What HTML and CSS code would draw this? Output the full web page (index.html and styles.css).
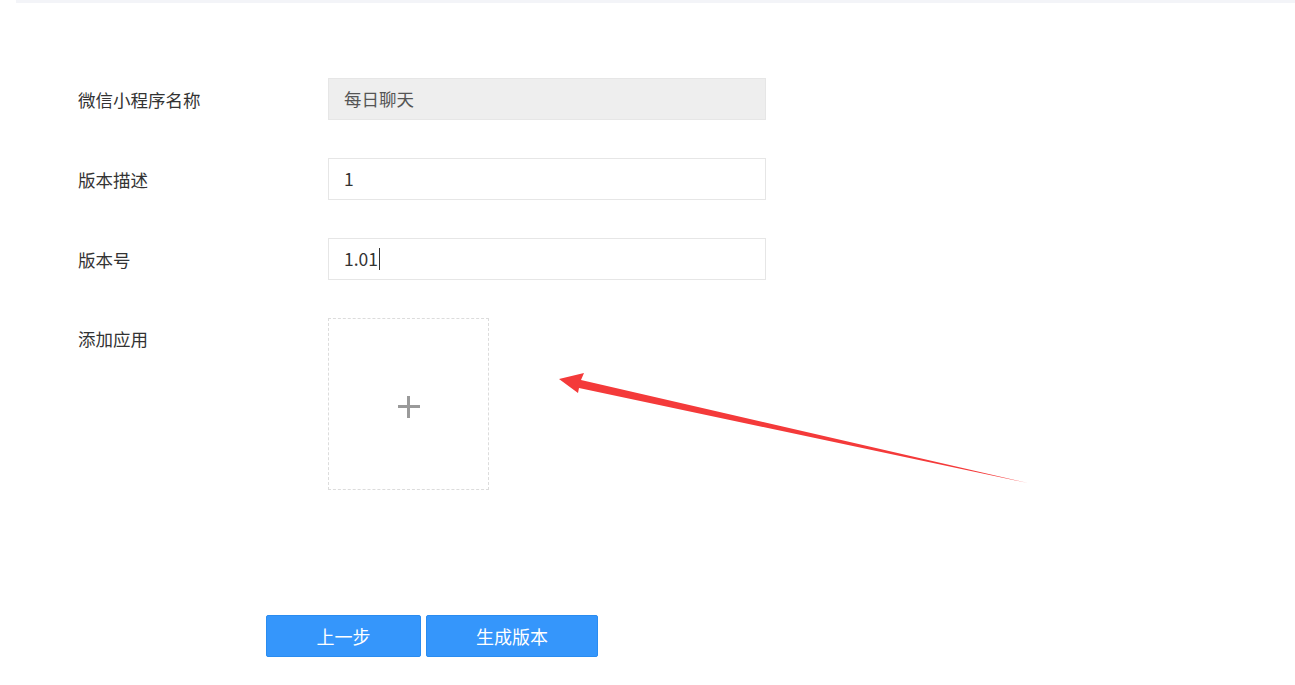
FILE: index.html
```html
<!DOCTYPE html>
<html>
<head lang="zh">
    <meta charset="UTF-8">
    <title>生成版本</title>
    <link rel="stylesheet" href="styles.css">
</head>
<body>
    <div class="top-bar"></div>
    <div class="page">
        <div class="form">
            <div class="form-row">
                <label class="form-label">微信小程序名称</label>
                <div class="field disabled">每日聊天</div>
            </div>
            <div class="form-row">
                <label class="form-label">版本描述</label>
                <div class="field">1</div>
            </div>
            <div class="form-row">
                <label class="form-label">版本号</label>
                <div class="field">1.01<span class="caret"></span></div>
            </div>
            <div class="form-row upload-row">
                <label class="form-label">添加应用</label>
                <div class="upload"><span class="plus"></span></div>
            </div>
        </div>
        <div class="btns">
            <a href="javascript:;" class="btn prev">上一步</a>
            <a href="javascript:;" class="btn build">生成版本</a>
        </div>
    </div>
    <!-- 标注箭头 -->
    <svg class="arrow" width="1295" height="685" viewBox="0 0 1295 685">
        <polygon points="559,379 584,373 581,380 1028,483 579,388 578,393" fill="#f43a3a"/>
    </svg>
</body>
</html>
```

FILE: styles.css
```css
*{
    margin:0; padding:0;
    text-decoration: none;
    box-sizing: border-box;
}
body{
    background:#fff;
    font-family: "Noto Sans CJK SC", "Microsoft YaHei", sans-serif;
    color:#333;
    position:relative;
    width:1295px;
    height:685px;
    overflow:hidden;
}
.top-bar{
    height:3px;
    margin-left:16px;
    background-color:#f3f4f8;
}
.page{
    padding-top:75px;
}
.form{
    padding-left:78px;
}
.form-row{
    display:flex;
    align-items:center;
    height:42px;
    margin-bottom:38px;
}
.form-label{
    width:250px;
    font-size:17.5px;
    color:#333;
}
.field{
    width:438px;
    height:42px;
    line-height:40px;
    padding-left:15px;
    border:1px solid #e6e6e6;
    font-size:17.5px;
    color:#333;
    display:flex;
    align-items:center;
}
.field.disabled{
    background-color:#eeeeee;
    color:#555;
}
.caret{
    display:inline-block;
    width:1px;
    height:22px;
    margin-left:1px;
    background:#333;
}
.upload-row{
    align-items:flex-start;
    height:auto;
    margin-bottom:0;
}
.upload-row .form-label{
    line-height:42px;
}
.upload{
    width:161px;
    height:172px;
    border:1px dashed #dcdcdc;
    display:flex;
    align-items:center;
    justify-content:center;
}
.plus{
    position:relative;
    width:22px;
    height:22px;
    margin-top:6px;
}
.plus::before,
.plus::after{
    content:"";
    position:absolute;
    background:#9a9a9a;
}
.plus::before{
    left:0; top:9px;
    width:22px; height:3px;
}
.plus::after{
    left:9px; top:0;
    width:3px; height:22px;
}
.btns{
    display:flex;
    gap:5px;
    padding-left:266px;
    margin-top:125px;
}
.btn{
    display:block;
    height:42px;
    line-height:40px;
    text-align:center;
    font-size:18px;
    color:#fff;
    background-color:#3596fb;
    border:1px solid #2a8cf0;
    border-radius:2px;
}
.prev{
    width:155px;
}
.build{
    width:172px;
}
.arrow{
    position:absolute;
    left:0;
    top:0;
    pointer-events:none;
}
```
